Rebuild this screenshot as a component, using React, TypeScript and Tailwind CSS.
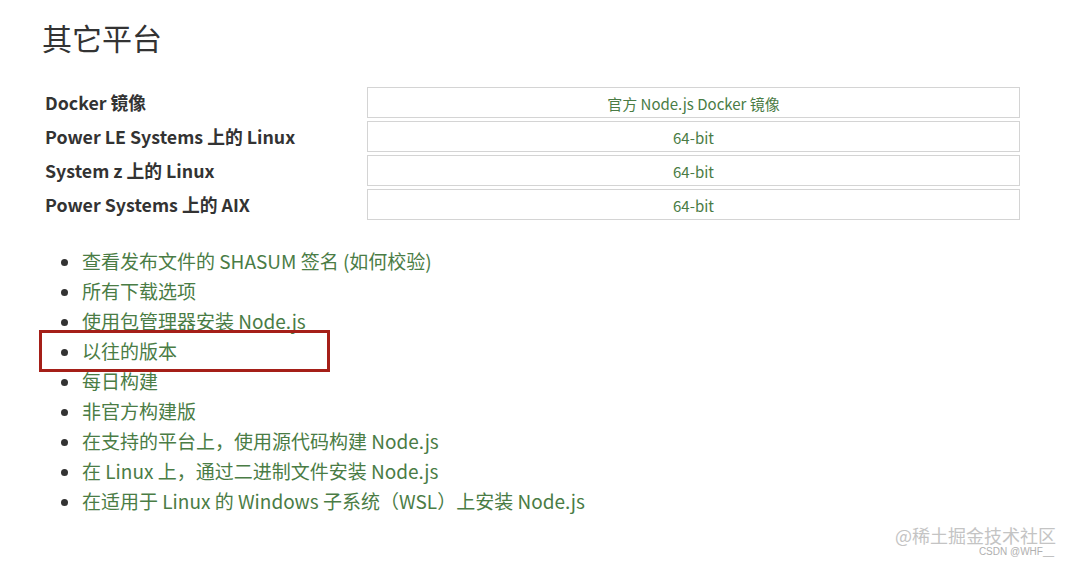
import React from "react";

const rows = [
  { label: "Docker 镜像", value: "官方 Node.js Docker 镜像" },
  { label: "Power LE Systems 上的 Linux", value: "64-bit" },
  { label: "System z 上的 Linux", value: "64-bit" },
  { label: "Power Systems 上的 AIX", value: "64-bit" },
];

const links = [
  "查看发布文件的 SHASUM 签名 (如何校验)",
  "所有下载选项",
  "使用包管理器安装 Node.js",
  "以往的版本",
  "每日构建",
  "非官方构建版",
  "在支持的平台上，使用源代码构建 Node.js",
  "在 Linux 上，通过二进制文件安装 Node.js",
  "在适用于 Linux 的 Windows 子系统（WSL）上安装 Node.js",
];

export default function App() {
  return (
    <div
      className="relative w-[1072px] h-[564px] bg-white overflow-hidden text-[#333]"
      style={{ fontFamily: '"Noto Sans CJK SC", "Noto Sans", sans-serif' }}
    >
      <div className="pl-[42px] pt-[17px]">
        <h2 className="text-[30px] leading-[40px] font-normal text-[#333]">其它平台</h2>
      </div>
      <div className="pl-[45px] pr-[52px] pt-[30px] flex flex-col gap-[3px]">
        {rows.map((r) => (
          <div key={r.label} className="flex items-center h-[31px]">
            <div className="w-[322px] text-[17.8px] font-bold text-[#333] leading-[31px]">{r.label}</div>
            <div className="flex-1 h-[31px] border border-[#d4d4d4] flex items-center justify-center text-[15px] leading-[20px] pt-[2px] text-[#4a7c45]">
              {r.value}
            </div>
          </div>
        ))}
      </div>
      <ul className="pl-[82px] pt-[26px] list-disc marker:text-[#333]">
        {links.map((l) => (
          <li key={l} className="text-[19px] leading-[30px] text-[#4a7c45]">
            {l}
          </li>
        ))}
      </ul>
      <div className="absolute left-[39px] top-[330px] w-[291px] h-[42px] border-[3px] border-[#a51f18]" />
      <div className="absolute left-[895px] top-[525px] flex flex-col items-end">
        <div className="text-[18px] leading-[21px] text-[#c4c4c4]">@稀土掘金技术社区</div>
        <div
          className="text-[10px] leading-[11px] text-[#b0b0b0] pr-[2px]"
          style={{ fontFamily: '"Liberation Sans", sans-serif' }}
        >
          CSDN @WHF__
        </div>
      </div>
    </div>
  );
}
